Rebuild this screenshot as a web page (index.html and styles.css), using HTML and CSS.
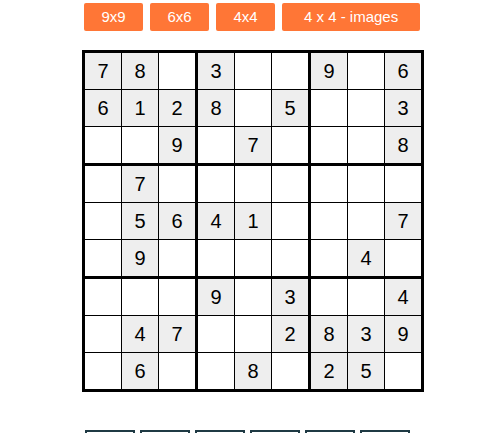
FILE: index.html
```html
<!DOCTYPE html>
<html>
<head>
<meta charset="utf-8">
<link rel="stylesheet" href="styles.css">
</head>
<body>
<div class="toolbar">
  <button class="btn btn-small">9x9</button>
  <button class="btn btn-small">6x6</button>
  <button class="btn btn-small">4x4</button>
  <button class="btn">4 x 4 - images</button>
</div>
<div class="board">
  <div class="block">
    <div class="cell given">7</div><div class="cell given">8</div><div class="cell"></div>
    <div class="cell given">6</div><div class="cell given">1</div><div class="cell given">2</div>
    <div class="cell"></div><div class="cell"></div><div class="cell given">9</div>
  </div>
  <div class="block">
    <div class="cell given">3</div><div class="cell"></div><div class="cell"></div>
    <div class="cell given">8</div><div class="cell"></div><div class="cell given">5</div>
    <div class="cell"></div><div class="cell given">7</div><div class="cell"></div>
  </div>
  <div class="block">
    <div class="cell given">9</div><div class="cell"></div><div class="cell given">6</div>
    <div class="cell"></div><div class="cell"></div><div class="cell given">3</div>
    <div class="cell"></div><div class="cell"></div><div class="cell given">8</div>
  </div>
  <div class="block">
    <div class="cell"></div><div class="cell given">7</div><div class="cell"></div>
    <div class="cell"></div><div class="cell given">5</div><div class="cell given">6</div>
    <div class="cell"></div><div class="cell given">9</div><div class="cell"></div>
  </div>
  <div class="block">
    <div class="cell"></div><div class="cell"></div><div class="cell"></div>
    <div class="cell given">4</div><div class="cell given">1</div><div class="cell"></div>
    <div class="cell"></div><div class="cell"></div><div class="cell"></div>
  </div>
  <div class="block">
    <div class="cell"></div><div class="cell"></div><div class="cell"></div>
    <div class="cell"></div><div class="cell"></div><div class="cell given">7</div>
    <div class="cell"></div><div class="cell given">4</div><div class="cell"></div>
  </div>
  <div class="block">
    <div class="cell"></div><div class="cell"></div><div class="cell"></div>
    <div class="cell"></div><div class="cell given">4</div><div class="cell given">7</div>
    <div class="cell"></div><div class="cell given">6</div><div class="cell"></div>
  </div>
  <div class="block">
    <div class="cell given">9</div><div class="cell"></div><div class="cell given">3</div>
    <div class="cell"></div><div class="cell"></div><div class="cell given">2</div>
    <div class="cell"></div><div class="cell given">8</div><div class="cell"></div>
  </div>
  <div class="block">
    <div class="cell"></div><div class="cell"></div><div class="cell given">4</div>
    <div class="cell given">8</div><div class="cell given">3</div><div class="cell given">9</div>
    <div class="cell given">2</div><div class="cell given">5</div><div class="cell"></div>
  </div>
</div>
<div class="keypad">
  <div class="key"></div>
  <div class="key"></div>
  <div class="key"></div>
  <div class="key"></div>
  <div class="key"></div>
  <div class="key"></div>
</div>
</body>
</html>
```
FILE: styles.css
```css
html, body {
  margin: 0;
  padding: 0;
  background: #fff;
  font-family: "Liberation Sans", Arial, sans-serif;
}

.toolbar {
  display: flex;
  gap: 7px;
  padding: 3px 0 0 84px;
}

.btn {
  height: 28px;
  padding: 0 22px;
  border: none;
  border-radius: 2px;
  background: #ff7636;
  color: #fff;
  font-family: "Liberation Sans", Arial, sans-serif;
  font-size: 15px;
  line-height: 28px;
}

.btn-small {
  width: 59px;
  padding: 0;
}

.board {
  width: fit-content;
  margin: 19px 0 0 82px;
  border: 3px solid #000;
  display: grid;
  grid-template-columns: repeat(3, auto);
  gap: 3px;
  background: #000;
}

.block {
  display: grid;
  grid-template-columns: repeat(3, 36px);
  grid-auto-rows: 36px;
  gap: 1px;
  background: #000;
}

.cell {
  background: #fff;
  display: flex;
  align-items: center;
  justify-content: center;
  font-size: 20px;
  color: #000;
}

.cell.given {
  background: #eeeeee;
}

.keypad {
  display: flex;
  gap: 5px;
  margin-top: 38px;
  padding-left: 85px;
}

.key {
  width: 50px;
  height: 40px;
  box-sizing: border-box;
  border: 2px solid #1f3a44;
}
```
